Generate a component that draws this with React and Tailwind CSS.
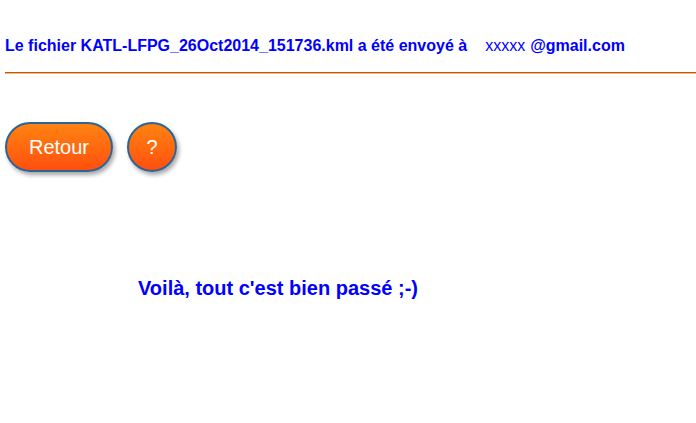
import React from 'react';

const App = () => {
  return (
    <div className="min-h-[423px] bg-white pl-[5px] font-['Liberation_Sans',Arial,sans-serif] text-[#0000ff]">
      {/* Header: file sent */}
      <div className="flex h-[72px] items-start pt-[37px] text-[16px] leading-[18px] font-bold">
        <span>Le fichier KATL-LFPG_26Oct2014_151736.kml a été envoyé à</span>
        <span className="ml-[18px] font-normal">xxxxx</span>
        <span className="ml-[5px]">@gmail.com</span>
      </div>
      <div className="border-t border-b border-t-[#b65c0c] border-b-[#ffb37a]" />

      {/* Buttons */}
      <div className="mt-[48px] flex gap-[14px]">
        <button className="flex h-[50px] w-[108px] items-center justify-center rounded-full border-2 border-[#2c6494] bg-gradient-to-b from-[#ff8211] to-[#ff4e0e] text-[20px] text-white shadow-[2px_3px_4px_rgba(0,0,0,0.35)]">
          Retour
        </button>
        <button className="flex h-[50px] w-[50px] items-center justify-center rounded-full border-2 border-[#2c6494] bg-gradient-to-b from-[#ff8211] to-[#ff4e0e] text-[20px] text-white shadow-[2px_3px_4px_rgba(0,0,0,0.35)]">
          ?
        </button>
      </div>

      {/* Status */}
      <div className="mt-[104px] pl-[133px] text-[20px] font-bold leading-[24px]">
        Voilà, tout c'est bien passé ;-)
      </div>
    </div>
  );
};

export default App;
